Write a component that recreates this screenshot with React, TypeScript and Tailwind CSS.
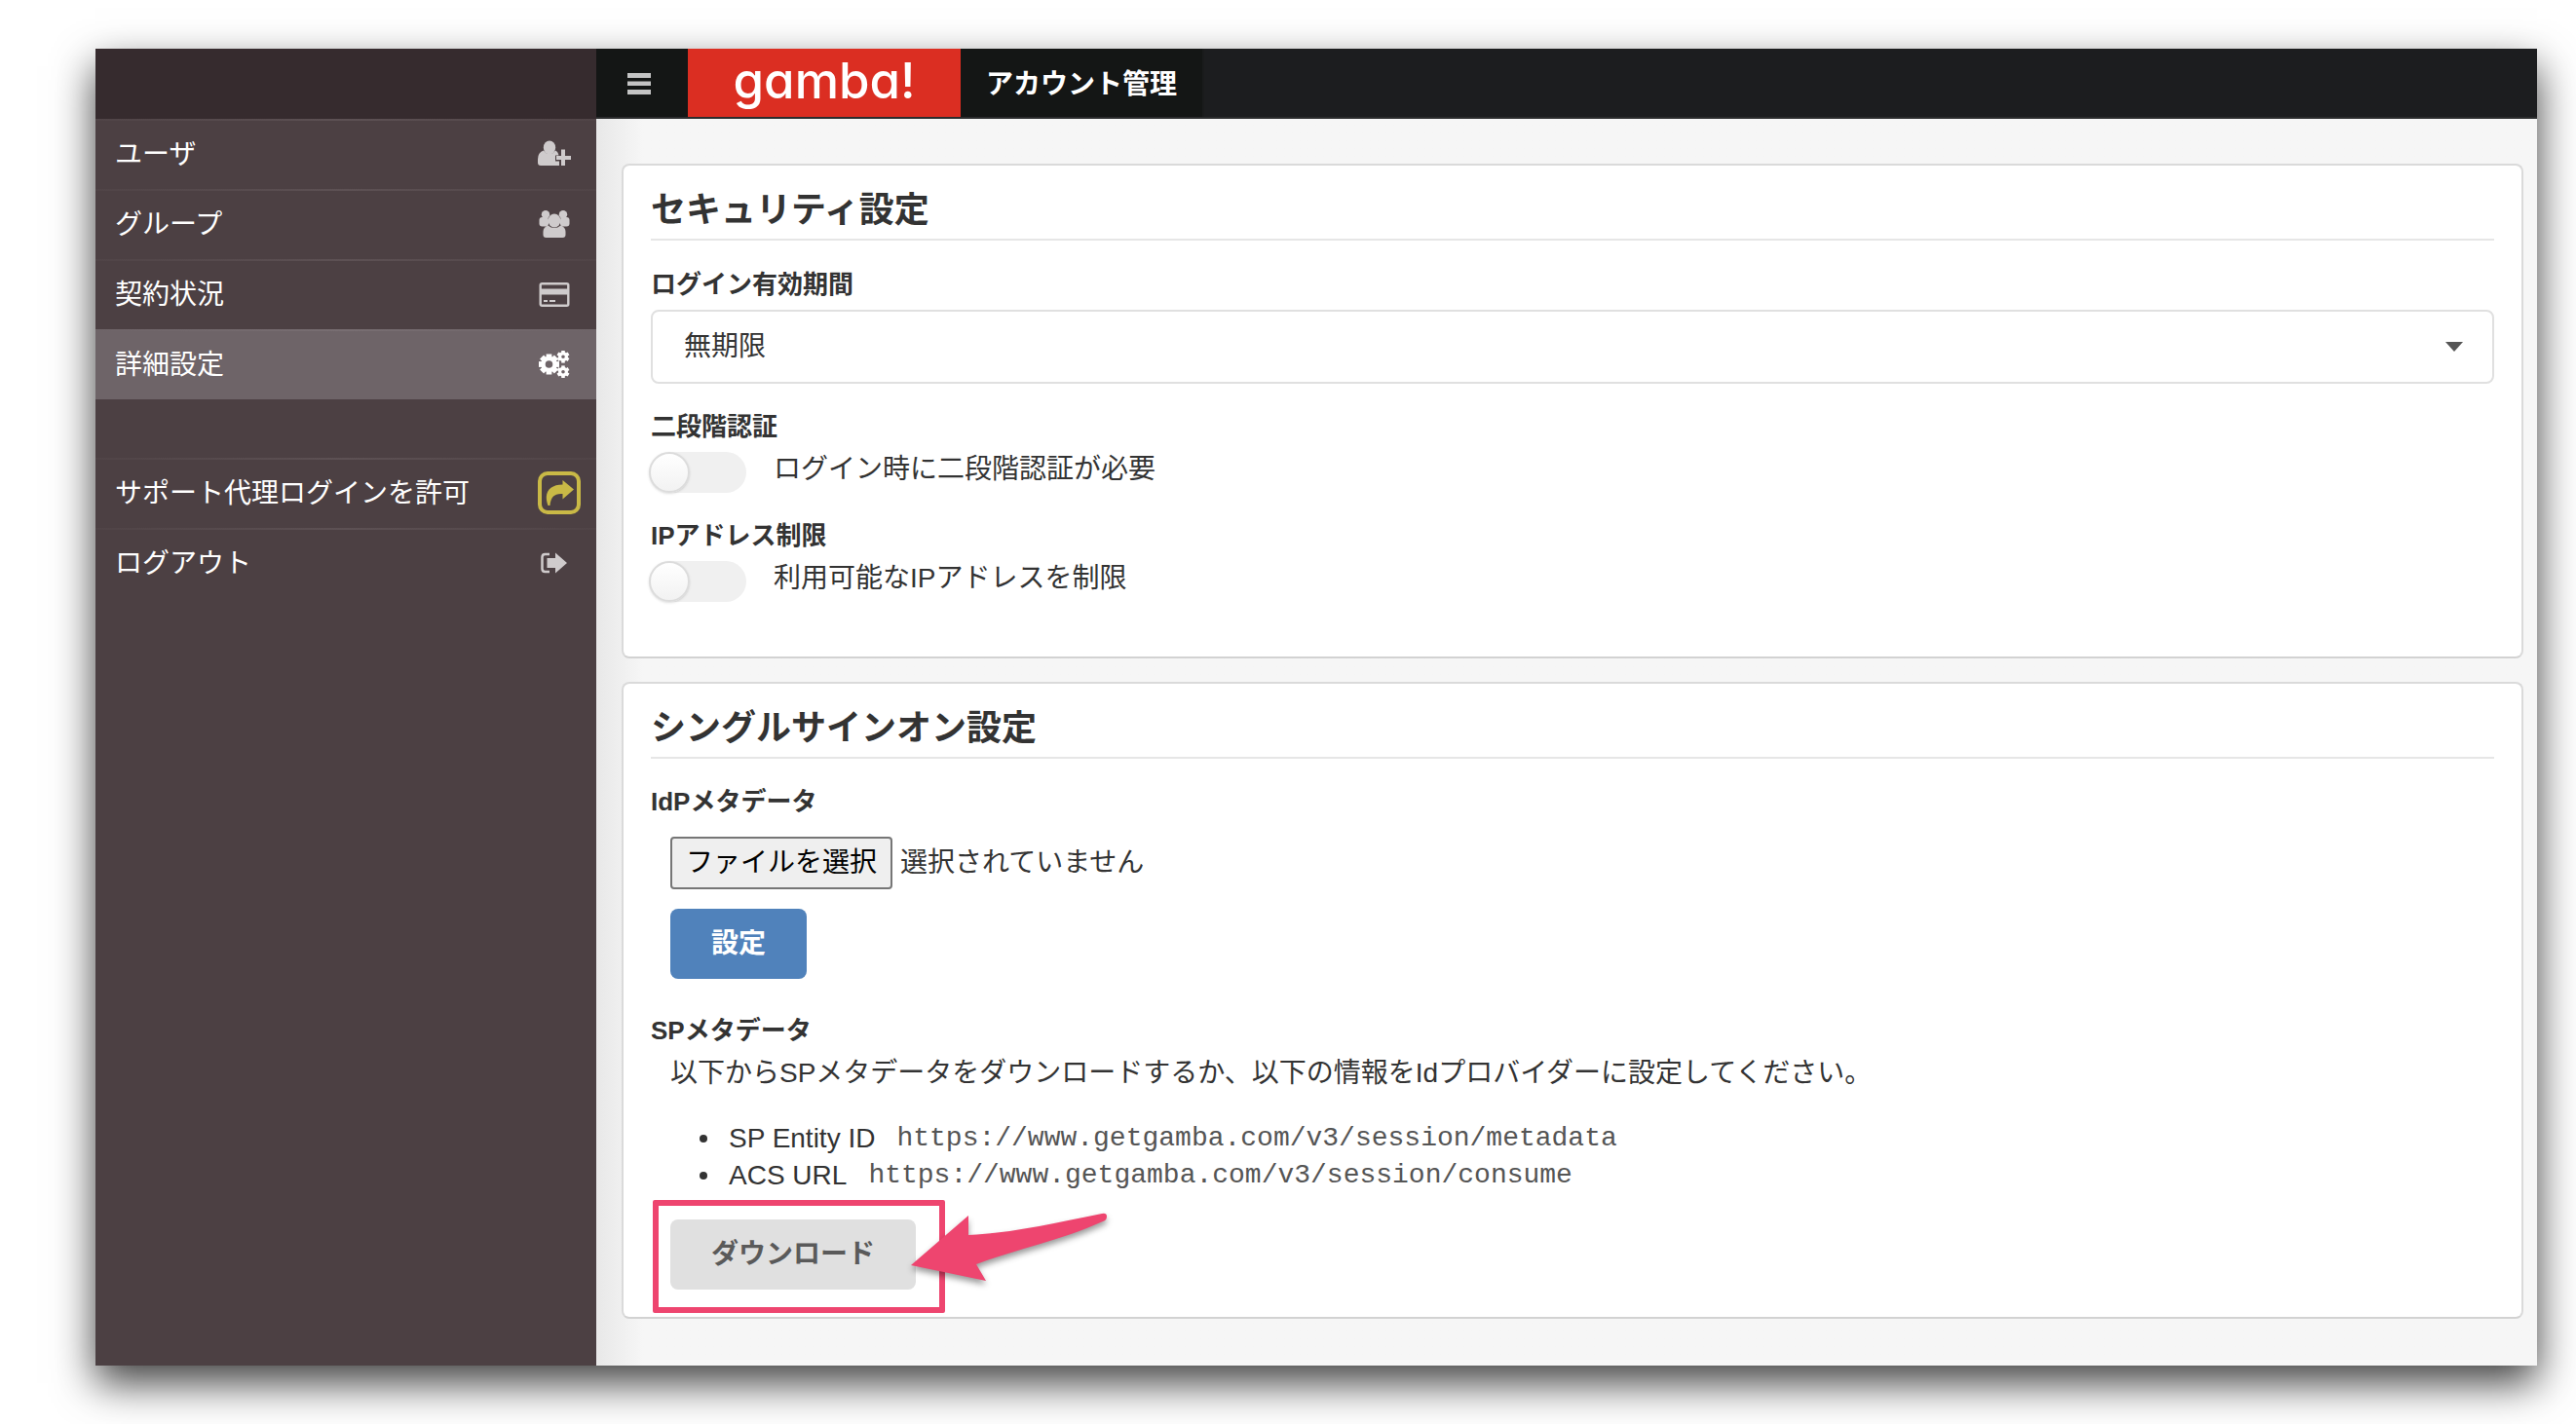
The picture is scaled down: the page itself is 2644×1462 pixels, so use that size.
import { useRef, useState, type ReactNode } from "react";

const SAML_ENDPOINTS = [
  { name: "SP Entity ID", url: "https://www.getgamba.com/v3/session/metadata" },
  { name: "ACS URL", url: "https://www.getgamba.com/v3/session/consume" },
];

function UserPlusIcon() {
  return (
    <svg viewBox="0 0 34 28" className="h-7 w-[34px]" fill="currentColor" aria-hidden="true">
      <ellipse cx="12" cy="7.5" rx="6.2" ry="7" />
      <path d="M6 10.5Q0 12.500 0 19.500V23Q0 26 3 26H22v-4.500h-4v-6h3.500q-.8-4-3.500-5-2.500 3.500-6 3.500t-6-3.500Z" />
      <path d="M24 9.500h4v6.500h6v4h-6v6h-4v-6h-5v-4h5Z" />
    </svg>
  );
}

function GroupIcon() {
  return (
    <svg viewBox="0 0 34 28" className="h-7 w-[34px]" fill="currentColor" aria-hidden="true">
      <circle cx="8" cy="4.200" r="4.200" />
      <circle cx="26" cy="4.200" r="4.200" />
      <rect x="1.500" y="7" width="9.500" height="9.500" rx="3" />
      <rect x="23" y="7" width="9.500" height="9.500" rx="3" />
      <ellipse cx="17" cy="10.500" rx="6.400" ry="7" />
      <path d="M10.500 15.500q3 2.500 6.500 2.500t6.500-2.500Q28.500 17 28.500 22v3q0 3-3 3h-17q-3 0-3-3V22q0-5 5-6.500Z" />
    </svg>
  );
}

function CardIcon() {
  return (
    <svg viewBox="0 0 34 28" className="h-7 w-[34px]" fill="currentColor" aria-hidden="true">
      <rect x="2.700" y="3.200" width="28.600" height="22.600" rx="1.500" fill="none" stroke="currentColor" strokeWidth="2.400" />
      <path d="M3 8.500h28v6H3ZM6 20h4v2H6Zm6 0h6v2h-6Z" />
    </svg>
  );
}

function Gear({ cx, cy, r, teeth, hole }: { cx: number; cy: number; r: number; teeth: number; hole: number }) {
  const width = r * 0.55;
  return (
    <g transform={`translate(${cx} ${cy})`}>
      <circle r={(r * 0.78 + hole) / 2} fill="none" stroke="currentColor" strokeWidth={r * 0.78 - hole} />
      {Array.from({ length: teeth }, (_, i) => (
        <rect
          key={i}
          x={-width / 2}
          y={-r}
          width={width}
          height={r * 0.35}
          fill="currentColor"
          transform={`rotate(${(360 / teeth) * i})`}
        />
      ))}
    </g>
  );
}

function GearsIcon() {
  return (
    <svg viewBox="0 0 34 28" className="h-7 w-[34px]" aria-hidden="true">
      <Gear cx={11.5} cy={14} r={10.5} teeth={8} hole={3.8} />
      <Gear cx={26} cy={6.2} r={6.4} teeth={6} hole={1.8} />
      <Gear cx={26} cy={21.8} r={6.4} teeth={6} hole={1.8} />
    </svg>
  );
}

function ShareIcon() {
  return (
    <span className="flex size-11 items-center justify-center rounded-[10px] border-4 border-[#c9b946] text-[#c9b946]">
      <svg viewBox="0 0 30 28" className="h-7 w-[30px]" fill="currentColor" aria-hidden="true">
        <path d="M18.500 1 30 10.500 18.500 20.500V15C11 14.500 6.500 17 5.500 27H3.500C-1.500 14 5 5.500 18.500 5.500Z" />
      </svg>
    </span>
  );
}

function LogoutIcon() {
  return (
    <svg viewBox="0 0 34 28" className="h-7 w-[34px]" fill="currentColor" aria-hidden="true">
      <path d="M12 5H7.500Q4.500 5 4.500 8v12q0 3 3 3H12" fill="none" stroke="currentColor" strokeWidth="2.500" />
      <path d="M9.500 9H18V3.500L30 14 18 24.500V19H9.500Z" />
    </svg>
  );
}

function MenuItem({ label, icon, active }: { label: string; icon: ReactNode; active?: boolean }) {
  return (
    <li className={active ? "bg-[#6e6468]" : ""}>
      <div
        className={
          active
            ? "h-0.5 bg-linear-to-r from-[#6e6468] via-[#786e72] to-[#6e6468]"
            : "h-0.5 bg-linear-to-r from-[#504447] via-[#5d5154] to-[#504447]"
        }
      />
      <a
        href="#"
        aria-current={active ? "page" : undefined}
        className="flex h-[70px] items-center justify-between pr-4 pl-5 text-white"
      >
        <span>{label}</span>
        <span className={active ? "flex w-11 pb-0.5 text-white" : "flex w-11 pb-0.5 text-[#cfcbcc]"}>{icon}</span>
      </a>
    </li>
  );
}

function Panel({ title, children }: { title: string; children: ReactNode }) {
  return (
    <section className="rounded-lg border-2 border-[#dadada] border-b-[#d2d2d2] bg-white px-7 pt-[22px]">
      <h2 className="border-b-2 border-[#e6e6e6] pb-[5px] text-[36px] leading-12 font-bold">{title}</h2>
      {children}
    </section>
  );
}

function Toggle({ id, title, label }: { id: string; title: string; label: string }) {
  const [on, setOn] = useState(false);
  return (
    <div>
      <h3 className="text-[26px] leading-9 font-bold">{title}</h3>
      <div className="mt-2 -ml-0.5 flex items-start">
        <label htmlFor={id} className="relative block h-[42px] w-[100px] cursor-pointer rounded-full bg-[#f0f0f0] has-checked:bg-[#5082bb]">
          <input id={id} type="checkbox" checked={on} onChange={() => setOn(!on)} className="peer sr-only" />
          <span className="absolute top-0 left-0 size-[42px] rounded-full border-2 border-[#dcdcdc] bg-linear-to-b from-white to-[#f2f2f2] shadow-sm peer-checked:left-14" />
        </label>
        <label htmlFor={id} className="ml-7 leading-9">
          {label}
        </label>
      </div>
    </div>
  );
}

export default function App() {
  const fileRef = useRef<HTMLInputElement>(null);
  const [fileName, setFileName] = useState("");

  return (
    <div className="flex min-h-screen bg-white pt-[50px] pr-10 pb-[60px] pl-[98px] font-['Liberation_Sans','Noto_Sans_CJK_JP',sans-serif] text-[28px] text-[#333]">
      <div className="flex flex-1 bg-[#f6f6f6] shadow-[0_18px_40px_rgba(0,0,0,0.75)]">
        <aside className="w-[514px] shrink-0 bg-[#4c4043]">
          <div className="h-[72px] bg-[#362b2e]" />
          <nav>
            <ul>
              <MenuItem label="ユーザ" icon={<UserPlusIcon />} />
              <MenuItem label="グループ" icon={<GroupIcon />} />
              <MenuItem label="契約状況" icon={<CardIcon />} />
              <MenuItem label="詳細設定" icon={<GearsIcon />} active />
            </ul>
            <ul className="mt-[60px]">
              <MenuItem label="サポート代理ログインを許可" icon={<ShareIcon />} />
              <MenuItem label="ログアウト" icon={<LogoutIcon />} />
            </ul>
          </nav>
        </aside>

        <div className="flex min-w-0 flex-1 flex-col">
          <header className="flex h-[72px] border-b-2 border-[#2b2c2d] bg-[#1c1d1f] text-white">
            <button type="button" aria-label="メニュー" className="flex w-[94px] items-center bg-[#141615] pt-0.5 pl-8">
              <svg viewBox="0 0 24 22" className="h-[22px] w-6" fill="#c4c4c4" aria-hidden="true">
                <path d="M0 0h24v5H0ZM0 8.500h24v4.500H0ZM0 17h24v5H0Z" />
              </svg>
            </button>
            <a
              href="#"
              className="flex w-[280px] justify-center bg-[#db2e22] font-['Inter',sans-serif] text-[51px] leading-[66px] font-medium [font-feature-settings:'cv11']"
            >
              gamba!
            </a>
            <a href="#" className="flex items-center border-r-2 border-[#1a1b1c] bg-[#141615] px-[26px] pt-1 font-bold">
              アカウント管理
            </a>
          </header>

          <main className="flex flex-1 flex-col gap-6 bg-linear-to-r from-[#e8e8e8] to-[#f6f6f6] to-[48px] pt-[46px] pr-[14px] pl-[26px]">
            <Panel title="セキュリティ設定">
              <div className="flex flex-col gap-[26px] pt-[27px] pb-14">
                <div>
                  <label htmlFor="expires" className="block text-[26px] leading-9 font-bold">
                    ログイン有効期間
                  </label>
                  <div className="relative mt-2">
                    <select
                      id="expires"
                      className="h-[76px] w-full appearance-none rounded-lg border-2 border-[#e0e0e0] bg-white px-8"
                    >
                      <option>無期限</option>
                    </select>
                    <svg
                      viewBox="0 0 18 10"
                      className="pointer-events-none absolute top-[33px] right-8 h-2.5 w-[18px]"
                      fill="#555"
                      aria-hidden="true"
                    >
                      <path d="M0 0h18L9 10Z" />
                    </svg>
                  </div>
                </div>
                <Toggle id="two-factor" title="二段階認証" label="ログイン時に二段階認証が必要" />
                <Toggle id="ip-limit" title="IPアドレス制限" label="利用可能なIPアドレスを制限" />
              </div>
            </Panel>

            <Panel title="シングルサインオン設定">
              <div className="pt-[26px]">
                <label htmlFor="idp-metadata" className="block text-[26px] leading-9 font-bold">
                  IdPメタデータ
                </label>
                <div className="mt-[18px] flex items-center gap-2 pl-5">
                  <input
                    ref={fileRef}
                    id="idp-metadata"
                    type="file"
                    className="sr-only"
                    onChange={(e) => setFileName(e.target.files?.[0]?.name ?? "")}
                  />
                  <button
                    type="button"
                    onClick={() => fileRef.current?.click()}
                    className="h-[54px] rounded-sm border-2 border-[#767676] bg-[#efefef] px-[14px] text-black"
                  >
                    ファイルを選択
                  </button>
                  <span>{fileName || "選択されていません"}</span>
                </div>
                <button type="button" className="mt-5 ml-5 block h-[72px] rounded-lg bg-[#5082bb] px-[42px] font-bold text-white">
                  設定
                </button>
              </div>

              <div className="mt-[35px] pb-7">
                <h3 className="text-[26px] leading-9 font-bold">SPメタデータ</h3>
                <div className="mt-2 pl-5">
                  <p className="leading-9">
                    以下からSPメタデータをダウンロードするか、以下の情報をIdプロバイダーに設定してください。
                  </p>
                  <ul className="mt-[30px] leading-[38px]">
                    {SAML_ENDPOINTS.map((endpoint) => (
                      <li key={endpoint.name} className="flex items-center pl-[30px]">
                        <span className="mr-[22px] size-2 rounded-full bg-[#333]" />
                        {endpoint.name}
                        <code className="ml-[22px] font-['Liberation_Mono',monospace] text-[#555]">{endpoint.url}</code>
                      </li>
                    ))}
                  </ul>
                  <div className="relative mt-[26px] w-fit">
                    <button type="button" className="block h-[72px] rounded-lg bg-[#e0e0e0] px-[42px] font-bold text-[#5a5a5a]">
                      ダウンロード
                    </button>
                    <div className="pointer-events-none absolute -top-5 -right-[30px] -bottom-6 -left-[18px] rounded-xs border-[6px] border-[#ee456f]" />
                    <svg
                      viewBox="0 0 215 90"
                      className="pointer-events-none absolute -top-3 left-[242px] h-[90px] w-[215px] drop-shadow-[0_4px_3px_rgba(0,0,0,0.4)]"
                      fill="#ee456f"
                      aria-hidden="true"
                    >
                      <path d="M5 59 64 8V28C110 26 150 16 201 6Q206 5 206 9T202 14C160 33 115 42 72 58L82 75Z" />
                    </svg>
                  </div>
                </div>
              </div>
            </Panel>
          </main>
        </div>
      </div>
    </div>
  );
}
